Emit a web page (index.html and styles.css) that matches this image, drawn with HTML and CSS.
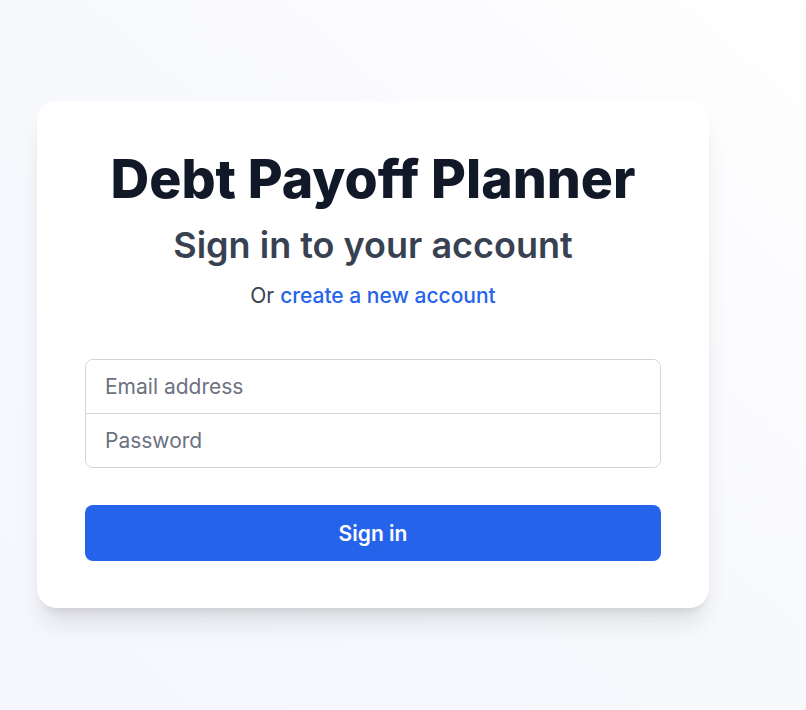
FILE: index.html
```html
<!DOCTYPE html>
<html lang="en">
<head>
<meta charset="utf-8">
<title>Debt Payoff Planner</title>
<link rel="stylesheet" href="styles.css">
</head>
<body>
<main class="page">
  <section class="card">
    <h1 class="title">Debt Payoff Planner</h1>
    <h2 class="subtitle">Sign in to your account</h2>
    <p class="alt">Or <a href="#" class="link">create a new account</a></p>
    <form class="form">
      <div class="fields">
        <input class="field" type="email" placeholder="Email address">
        <input class="field" type="password" placeholder="Password">
      </div>
      <button class="btn" type="button">Sign in</button>
    </form>
  </section>
</main>
</body>
</html>
```
FILE: styles.css
```css
* { box-sizing: border-box; }
html, body { margin: 0; padding: 0; }
body {
  font-family: Inter, "Noto Sans", sans-serif;
  min-height: 710px;
  background: linear-gradient(to bottom left, #ffffff 0%, #f8f9fd 45%, #f6f7fd 100%);
}
.page {
  padding-top: 101px;
  padding-left: 37px;
}
.card {
  width: 672px;
  background: #ffffff;
  border-radius: 20px;
  padding: 48px 48px 47px;
  box-shadow: 0 20px 25px -5px rgba(0,0,0,0.10), 0 8px 10px -6px rgba(0,0,0,0.10);
  display: flex;
  flex-direction: column;
}
.title {
  margin: 0;
  font-size: 53.6px;
  line-height: 60px;
  font-weight: 800;
  color: #111827;
  text-align: center;
}
.subtitle {
  margin: 15px 0 0;
  font-size: 36px;
  line-height: 42px;
  font-weight: 600;
  color: #374151;
  text-align: center;
}
.alt {
  margin: 16px 0 0;
  font-size: 21px;
  line-height: 28px;
  color: #374151;
  text-align: center;
}
.link {
  color: #2563eb;
  font-weight: 500;
  text-decoration: none;
}
.form {
  margin-top: 49px;
  display: flex;
  flex-direction: column;
  gap: 37px;
}
.fields {
  display: flex;
  flex-direction: column;
  border: 1px solid #d1d5db;
  border-radius: 8px;
  overflow: hidden;
}
.field {
  height: 53px;
  border: 0;
  padding: 0 19px;
  font-family: inherit;
  font-size: 21px;
  color: #111827;
  background: #fff;
  outline: none;
}
.field + .field { border-top: 1px solid #d1d5db; height: 54px; }
.field::placeholder { color: #6b7280; }
.btn {
  height: 56px;
  border: 0;
  border-radius: 8px;
  background: #2563eb;
  color: #fff;
  font-family: inherit;
  font-size: 21px;
  font-weight: 600;
  cursor: pointer;
}
```
